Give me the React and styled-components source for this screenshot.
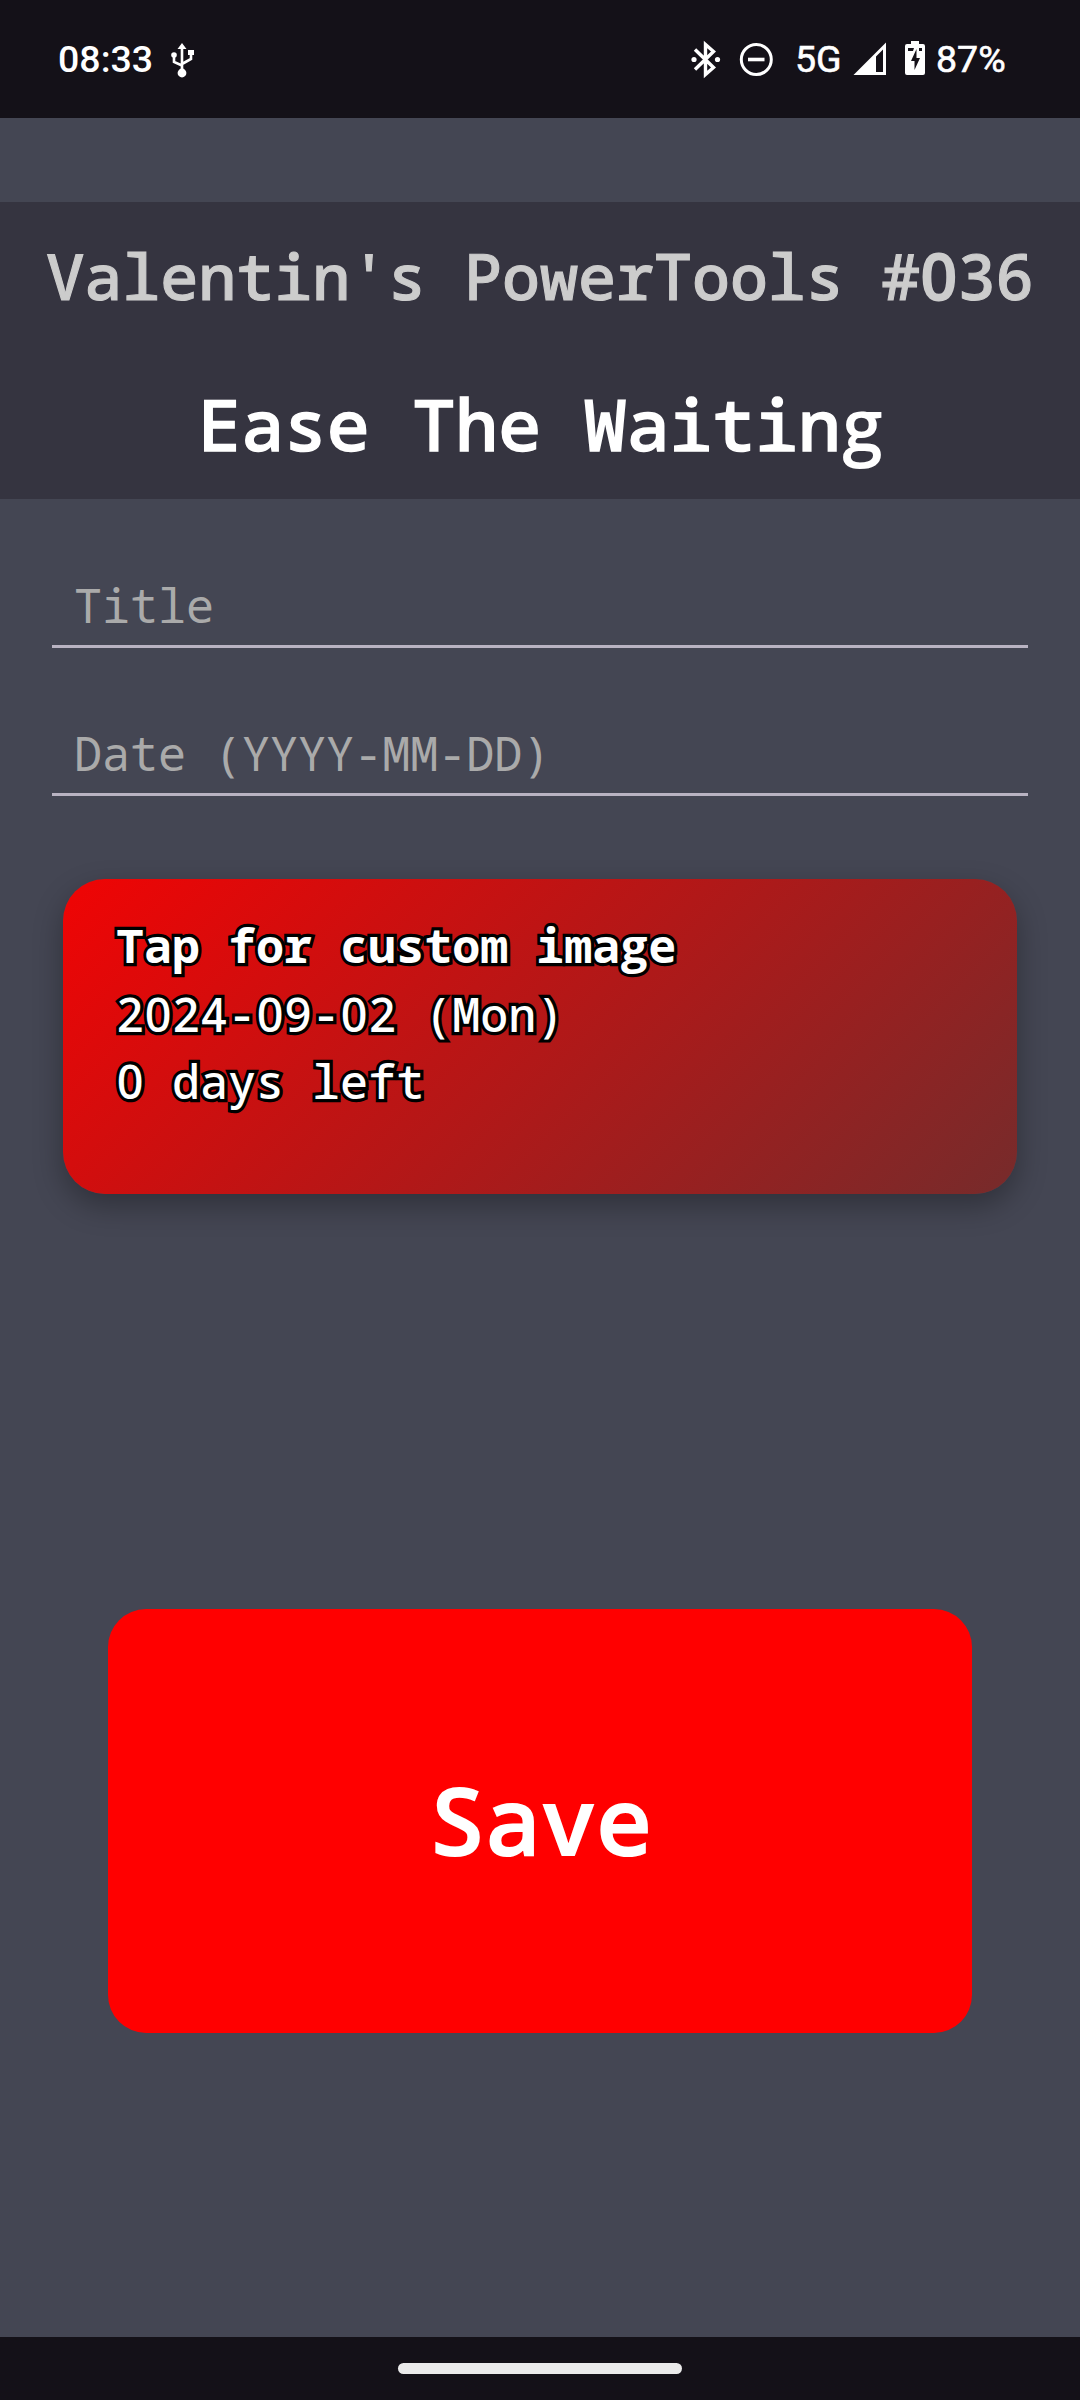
import React from "react";
import styled, { createGlobalStyle } from "styled-components";

const mono = '"Noto Sans Mono", "DejaVu Sans Mono", monospace';

const GlobalStyle = createGlobalStyle`
  * { box-sizing: border-box; }
  body { margin: 0; background: #444653; }
`;

const Screen = styled.div`
  width: 1080px;
  height: 2400px;
  display: flex;
  flex-direction: column;
  background: #444653;
  color: #fff;
  font-family: ${mono};
  overflow: hidden;
`;

const StatusBar = styled.header`
  height: 118px;
  flex: none;
  display: flex;
  align-items: flex-start;
  padding: 35px 76px 0 58px;
  background: #141118;
  font-family: Roboto, sans-serif;
`;

const StatusText = styled.span`
  width: ${(p) => p.$width}px;
  margin-right: ${(p) => p.$gap || 0}px;
  font-size: ${(p) => p.$size || 37}px;
  font-weight: ${(p) => p.$weight || 500};
  line-height: 48px;
  white-space: nowrap;
  -webkit-text-stroke: ${(p) => (p.$weight === 400 ? 0.6 : 0)}px #fff;
`;

const StatusIcon = styled.svg`
  flex: none;
  display: block;
  height: 48px;
  width: ${(p) => p.$width}px;
  margin-right: ${(p) => p.$gap || 0}px;
`;

const Spacer = styled.div`
  flex: 1;
`;

const Glyph = styled.span`
  display: inline-block;
  width: 0.6em;
  font-family: ${(p) => (p.$zero ? '"Noto Sans"' : '"Open Sans"')}, sans-serif;
  line-height: 0;
  text-align: center;
`;

const Banner = styled.section`
  height: 297px;
  flex: none;
  margin-top: 84px;
  padding-top: 1px;
  background: #353440;
  text-align: center;
  white-space: nowrap;

  ${Glyph} {
    -webkit-text-stroke-width: 2px;
  }
`;

const Series = styled.div`
  font-size: 63.3px;
  font-weight: 500;
  line-height: 146px;
  color: #ccc;
  -webkit-text-stroke: 1.1px #ccc;
`;

const Heading = styled.h1`
  margin: 0;
  padding: 3px 0 0 2px;
  font-size: 71.4px;
  font-weight: 500;
  line-height: 144px;
  -webkit-text-stroke: 1.5px #fff;
`;

const Form = styled.form`
  display: flex;
  flex-direction: column;
  flex: 1;
`;

const Field = styled.label`
  height: 103px;
  margin: ${(p) => p.$top}px 52px 0;
  padding-left: 22px;
  border-bottom: 3px solid #b9b3c2;
  font-size: 46.7px;
  line-height: 121px;
  color: #aaa;
`;

const Card = styled.section`
  width: 954px;
  height: 315px;
  margin: 83px 0 0 63px;
  padding: 32px 0 0 53px;
  border-radius: 42px;
  background: linear-gradient(135deg, #f00404, #762b2b);
  box-shadow: 0 12px 30px rgba(0, 0, 0, 0.3);
`;

const CardLine = styled.div`
  height: ${(p) => p.$height}px;
  line-height: ${(p) => p.$height}px;
  font-size: 46.7px;
  font-weight: ${(p) => (p.$bold ? 700 : 500)};
  white-space: nowrap;
  paint-order: stroke fill;
  -webkit-text-stroke: 6.4px #000;
`;

const SaveButton = styled.button`
  width: 864px;
  height: 424px;
  margin: 415px 108px 0;
  padding: 0 0 4px 1px;
  border: 0;
  border-radius: 38px;
  background: #f00;
  color: #fff;
  font-family: ${mono};
  font-size: 93px;
  font-weight: 500;
  -webkit-text-stroke: 2.2px #fff;
`;

const NavBar = styled.footer`
  height: 63px;
  flex: none;
  display: flex;
  justify-content: center;
  padding-top: 26px;
  background: #141118;
`;

const Handle = styled.div`
  width: 284px;
  height: 11px;
  border-radius: 6px;
  background: #ebebeb;
`;

const glyphs = (text) =>
  text.split(/([0g])/).map((part, i) =>
    i % 2 ? (
      <Glyph key={i} $zero={part === "0"}>
        {part}
      </Glyph>
    ) : (
      part
    )
  );

export default function App() {
  return (
    <Screen>
      <GlobalStyle />
      <StatusBar>
        <StatusText $width={113} $size={37.5}>08:33</StatusText>
        <StatusIcon $width={24} viewBox="0 0 24 48" fill="none" stroke="#fff" strokeWidth="2.6">
          <path d="M11 11v27M3 20v7l8 3.500M20 19v5l-9 5" />
          <path d="M11 8l4.500 6h-9zM17 15h6v5h-6z" fill="#fff" stroke="none" />
          <circle cx="3" cy="20" r="2.800" fill="#fff" stroke="none" />
          <circle cx="11" cy="38" r="4.400" fill="#fff" stroke="none" />
        </StatusIcon>
        <Spacer />
        <StatusIcon $width={30} $gap={18} viewBox="0 0 30 48" fill="none" stroke="#fff" strokeWidth="3.4">
          <path d="M4 14.500L22.500 32.500l-8 7V9.500l8 7L4 34.500" />
          <circle cx="3" cy="24.500" r="2.600" fill="#fff" stroke="none" />
          <circle cx="26.500" cy="24.500" r="2.600" fill="#fff" stroke="none" />
        </StatusIcon>
        <StatusIcon $width={34} $gap={22} viewBox="0 0 34 48" fill="none" stroke="#fff" strokeWidth="3">
          <circle cx="17.300" cy="24.500" r="15" />
          <path d="M9 24.500h16.500" strokeWidth="3.600" />
        </StatusIcon>
        <StatusText $width={48} $gap={10} $size={37.5} $weight={400}>5G</StatusText>
        <StatusIcon $width={34} $gap={18} viewBox="0 0 34 48">
          <path fill="#fff" fillRule="evenodd" d="M.5 40L33 7.500V40zM23 21.500V37h7V14.500z" />
        </StatusIcon>
        <StatusIcon $width={20} $gap={11} viewBox="0 0 20 48">
          <path
            fill="#fff"
            fillRule="evenodd"
            d="M6 6h8v3h4q2 0 2 2v27q0 2-2 2H2q-2 0-2-2V11q0-2 2-2h4zM3 13v3h5l1-3zM14 13v3h3v-3zM11.500 14L6 26h3.500v9L15 23h-3.500z"
          />
        </StatusIcon>
        <StatusText $width={68} $size={37.5} $weight={400}>87%</StatusText>
      </StatusBar>
      <Banner>
        <Series>{glyphs("Valentin's PowerTools #036")}</Series>
        <Heading>{glyphs("Ease The Waiting")}</Heading>
      </Banner>
      <Form>
        <Field $top={46}>Title</Field>
        <Field $top={45}>Date (YYYY-MM-DD)</Field>
        <Card>
          <CardLine $height={68} $bold>{glyphs("Tap for custom image")}</CardLine>
          <CardLine $height={70}>{glyphs("2024-09-02 (Mon)")}</CardLine>
          <CardLine $height={64}>{glyphs("0 days left")}</CardLine>
        </Card>
        <SaveButton type="button">Save</SaveButton>
      </Form>
      <NavBar>
        <Handle />
      </NavBar>
    </Screen>
  );
}
